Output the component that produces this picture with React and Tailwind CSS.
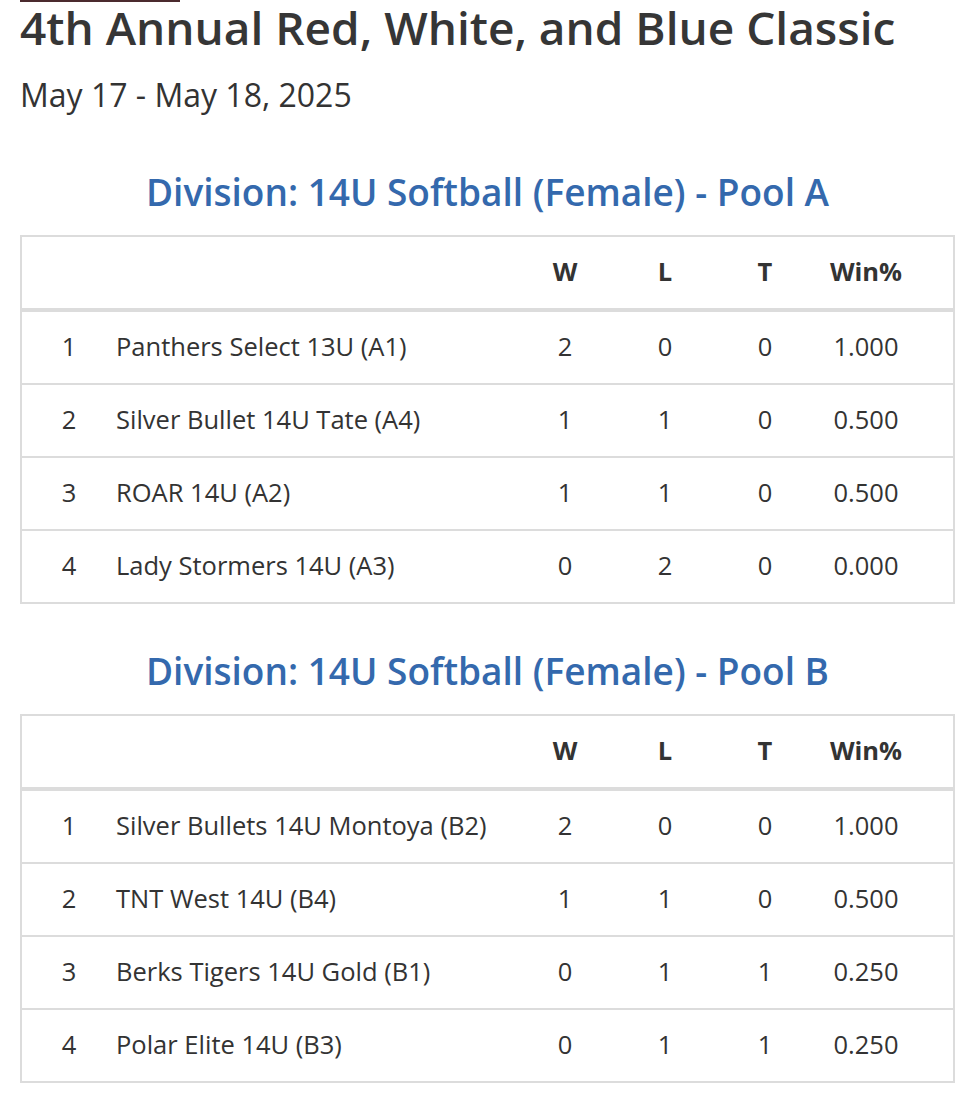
const pools = [
  {
    name: 'Division: 14U Softball (Female) - Pool A',
    teams: [
      { rank: 1, team: 'Panthers Select 13U (A1)', w: 2, l: 0, t: 0, pct: '1.000' },
      { rank: 2, team: 'Silver Bullet 14U Tate (A4)', w: 1, l: 1, t: 0, pct: '0.500' },
      { rank: 3, team: 'ROAR 14U (A2)', w: 1, l: 1, t: 0, pct: '0.500' },
      { rank: 4, team: 'Lady Stormers 14U (A3)', w: 0, l: 2, t: 0, pct: '0.000' },
    ],
  },
  {
    name: 'Division: 14U Softball (Female) - Pool B',
    teams: [
      { rank: 1, team: 'Silver Bullets 14U Montoya (B2)', w: 2, l: 0, t: 0, pct: '1.000' },
      { rank: 2, team: 'TNT West 14U (B4)', w: 1, l: 1, t: 0, pct: '0.500' },
      { rank: 3, team: 'Berks Tigers 14U Gold (B1)', w: 0, l: 1, t: 1, pct: '0.250' },
      { rank: 4, team: 'Polar Elite 14U (B3)', w: 0, l: 1, t: 1, pct: '0.250' },
    ],
  },
]

function PoolTable({ pool }) {
  return (
    <section>
      <h2 className="text-center text-[37px] font-semibold text-[#3469ad] leading-none pb-[25px]">
        {pool.name}
      </h2>
      {/* standings table */}
      <div className="border-x-2 border-t-2 border-[#dcdcdc] text-[25.5px] leading-none text-[#333]">
        <div className="flex items-center h-[75px] border-b-4 border-[#dcdcdc] font-bold pr-[36px]">
          <div className="w-[94px]"></div>
          <div className="flex-1"></div>
          <div className="w-[100px] text-center">W</div>
          <div className="w-[100px] text-center">L</div>
          <div className="w-[100px] text-center">T</div>
          <div className="w-[102px] text-center">Win%</div>
        </div>
        {pool.teams.map((row) => (
          <div key={row.rank} className="flex items-center h-[73px] border-b-2 border-[#dcdcdc] pr-[36px]">
            <div className="w-[94px] text-center">{row.rank}</div>
            <div className="flex-1">{row.team}</div>
            <div className="w-[100px] text-center">{row.w}</div>
            <div className="w-[100px] text-center">{row.l}</div>
            <div className="w-[100px] text-center">{row.t}</div>
            <div className="w-[102px] text-center">{row.pct}</div>
          </div>
        ))}
      </div>
    </section>
  )
}

export default function App() {
  return (
    <div className="bg-white min-h-[1100px] px-[20px] text-[#333]" style={{ fontFamily: '"Open Sans", "Noto Sans", sans-serif' }}>
      <div className="w-[160px] h-[2px] bg-[#4b2a2e]"></div>
      <h1 className="text-[46px] font-semibold leading-[1.1] text-[#363636]">4th Annual Red, White, and Blue Classic</h1>
      <p className="text-[32px] leading-none pt-[26px]">May 17 - May 18, 2025</p>
      <div className="w-[935px] pt-[62px] flex flex-col gap-[48px]">
        {pools.map((pool) => (
          <PoolTable key={pool.name} pool={pool} />
        ))}
      </div>
    </div>
  )
}
